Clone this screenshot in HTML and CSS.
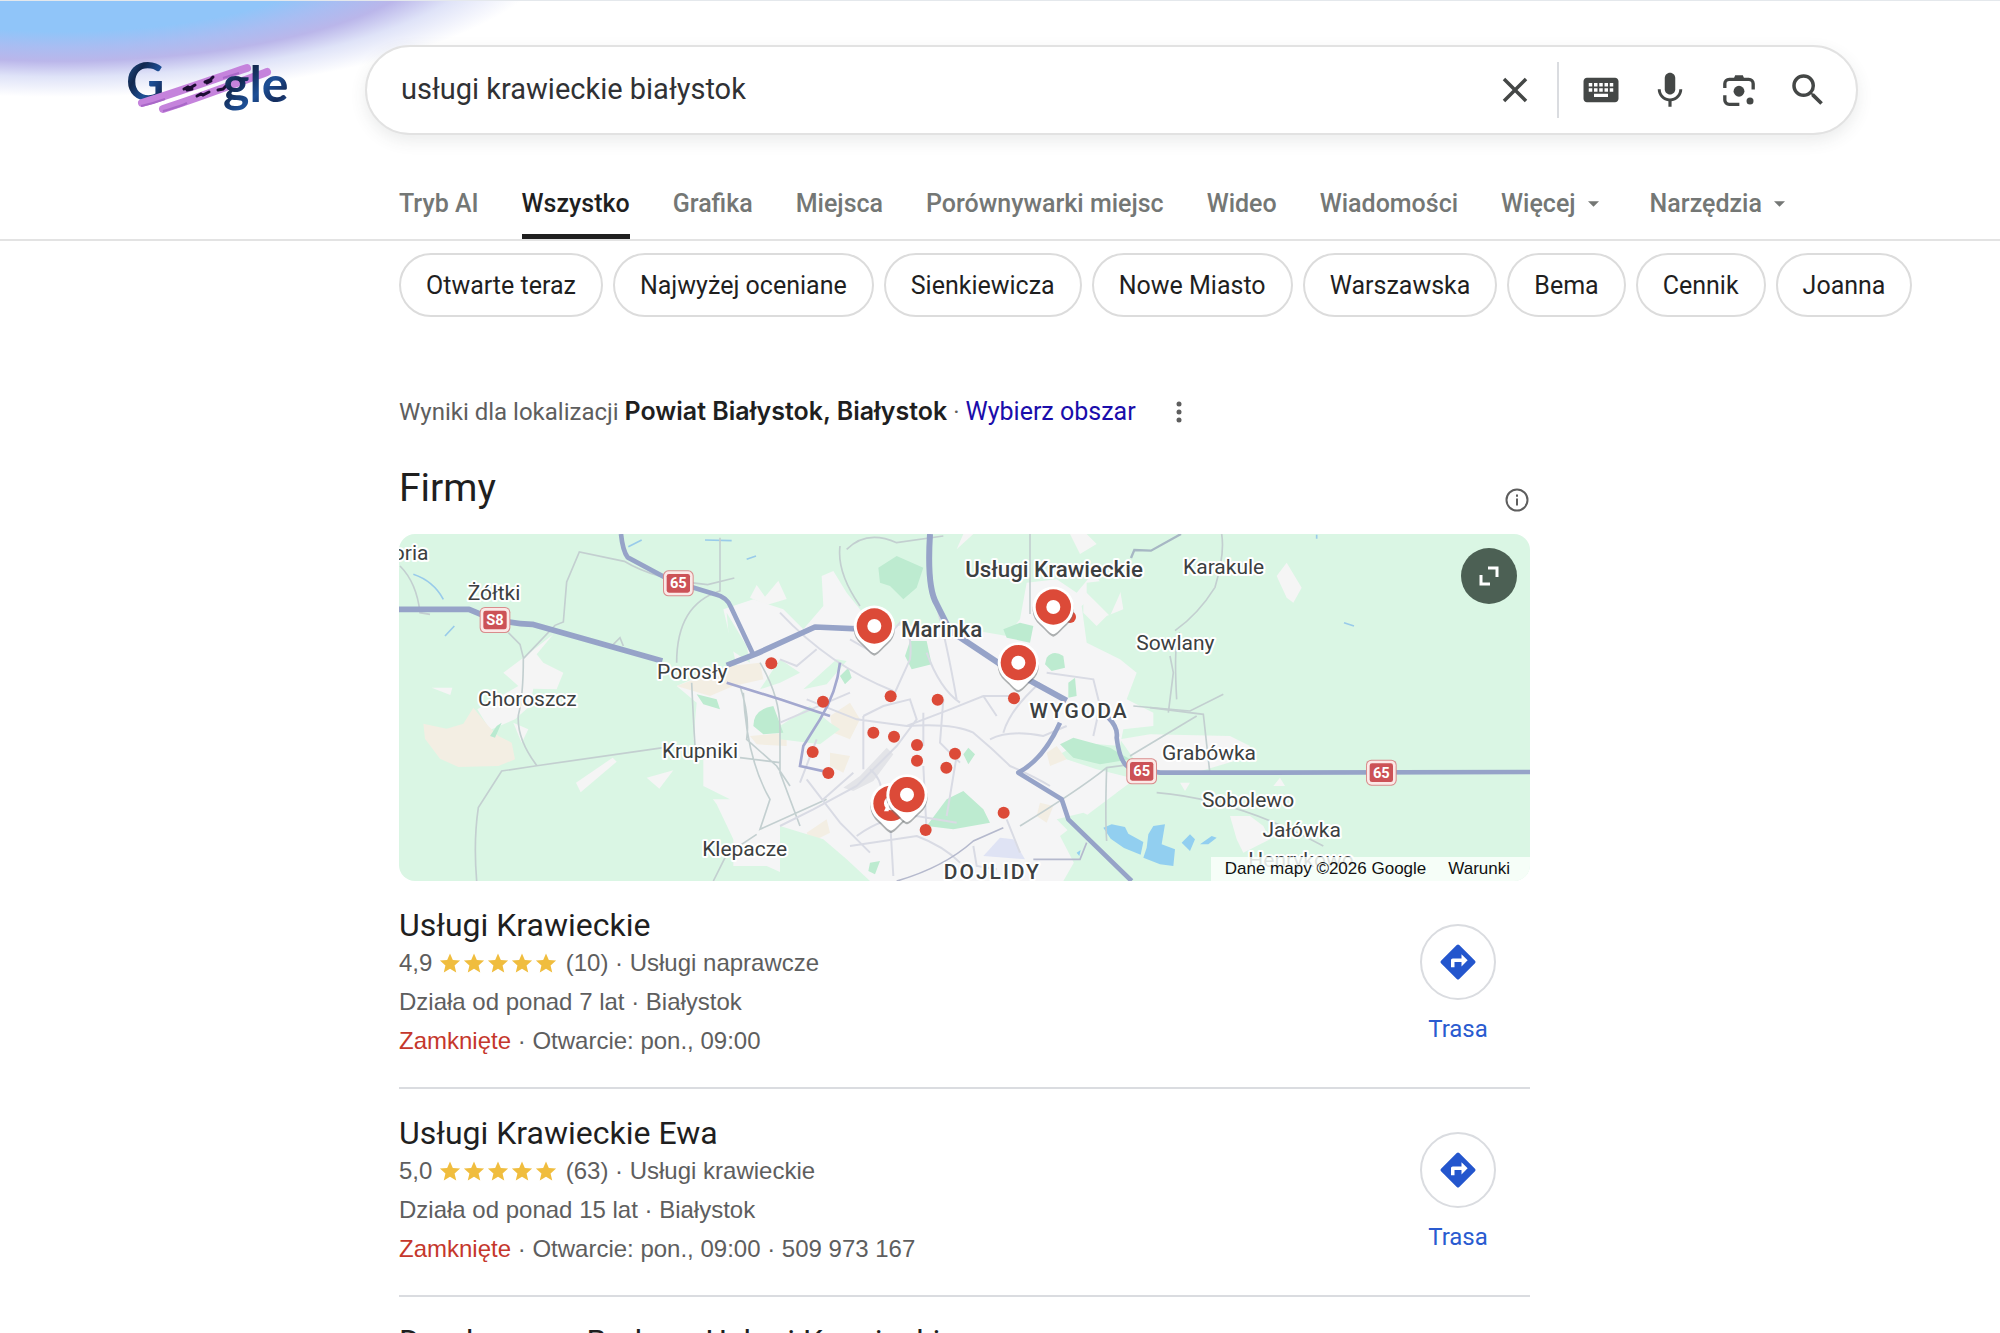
FILE: index.html
```html
<!DOCTYPE html>
<html lang="pl">
<head>
<meta charset="utf-8">
<meta name="viewport" content="width=device-width, initial-scale=1">
<title>usługi krawieckie białystok - Szukaj w Google</title>
<link rel="stylesheet" href="styles.css">
</head>
<body>
<svg class="defs" width="0" height="0" aria-hidden="true">
  <symbol id="star" viewBox="0 0 24 24"><path d="M12 1.500l3.100 7.200 7.900.7-6 5.200 1.800 7.800L12 18.300l-6.800 4.100L7 14.600 1 9.400l7.900-.7z"/></symbol>
  <symbol id="route" viewBox="0 0 24 24"><path d="M21.710 11.290l-9-9a1 1 0 0 0-1.410 0l-9 9a1 1 0 0 0 0 1.410l9 9c.39.39 1.020.39 1.410 0l9-9a1 1 0 0 0 0-1.410zM14 14.500V12h-4v3H8v-4c0-.55.45-1 1-1h5V7.500l3.500 3.500-3.500 3.500z"/></symbol>
  <symbol id="caret" viewBox="0 0 12 6"><path d="M0 0h12L6 6z"/></symbol>
</svg>

<header class="header">
  <div class="top">
    <a class="logo" href="#" aria-label="Google">
      <svg viewBox="0 0 170 64" width="170" height="64">
        <defs>
          <linearGradient id="ink" x1="0" y1="0" x2="1" y2="1">
            <stop offset="0" stop-color="#2a66a8"/><stop offset=".35" stop-color="#12284f"/><stop offset=".6" stop-color="#1d4f96"/><stop offset=".8" stop-color="#142c5c"/><stop offset="1" stop-color="#2b6cc4"/>
          </linearGradient>
        </defs>
        <text class="logo-text logo-cap" x="-1" y="45" fill="url(#ink)">G</text>
        <g fill="none" stroke="#c583dc" stroke-width="8" stroke-linecap="round">
          <path d="M15 47C45 38 90 22 120 12"/><path d="M36 53C65 44 105 29 140 16"/>
        </g>
        <g fill="none" stroke="#a968c8" stroke-width="2"><path d="M14 50c10-2 16-4 24-7M36 55c10-3 16-4 24-8M96 22l16-5"/></g>
        <g fill="none" stroke="#1c0d33" stroke-width="3" stroke-linecap="round">
          <path d="M57 33l4-2 2 1 5-3M78 26l5-2 3-3M70 40l4-2 2 1 6-3M91 34l5-1 3-3M60 34l5-1M80 27l4-2"/>
        </g>
        <text class="logo-text" x="96" y="46" fill="url(#ink)">gle</text>
      </svg>
    </a>
    <form class="search" role="search">
      <input class="search-input" type="text" aria-label="Szukaj" value="usługi krawieckie białystok">
      <button class="icon-btn" type="button" aria-label="Wyczyść"><svg viewBox="0 0 24 24"><path d="M19 6.410 17.590 5 12 10.590 6.410 5 5 6.410 10.590 12 5 17.590 6.410 19 12 13.410 17.590 19 19 17.590 13.410 12z"/></svg></button>
      <span class="divider"></span>
      <button class="icon-btn" type="button" aria-label="Klawiatura"><svg viewBox="0 0 24 24"><path d="M20 5H4c-1.100 0-1.990.9-1.990 2L2 17c0 1.100.9 2 2 2h16c1.100 0 2-.9 2-2V7c0-1.100-.9-2-2-2zm-9 3h2v2h-2V8zm0 3h2v2h-2v-2zM8 8h2v2H8V8zm0 3h2v2H8v-2zm-1 2H5v-2h2v2zm0-3H5V8h2v2zm9 6H8v-1.800h8V16zm0-3h-2v-2h2v2zm0-3h-2V8h2v2zm3 3h-2v-2h2v2zm0-3h-2V8h2v2z"/></svg></button>
      <button class="icon-btn" type="button" aria-label="Szukaj głosem"><svg viewBox="0 0 24 24"><path d="M12 14.500c1.660 0 3-1.340 3-3V5.200c0-1.660-1.340-3-3-3s-3 1.340-3 3v6.300c0 1.660 1.340 3 3 3z"/><path d="M17.300 11.500c0 3-2.400 5.300-5.300 5.300s-5.300-2.300-5.300-5.300H5c0 3.500 2.700 6.400 6.100 6.900v3.100h1.800v-3.100c3.400-.5 6.100-3.400 6.100-6.900z"/></svg></button>
      <button class="icon-btn" type="button" aria-label="Szukaj obrazem"><svg viewBox="0 0 24 24"><g fill="none" stroke="currentColor" stroke-width="1.900"><path d="M3.900 10.800V8.400a2.500 2.500 0 0 1 2.500-2.500h11.200a2.500 2.500 0 0 1 2.500 2.500v3.300M3.900 15v2.700a2.500 2.500 0 0 0 2.500 2.500h5.800"/></g><path d="M9 5.500l.8-1.900h4.400l.8 1.900z"/><circle cx="12" cy="12.700" r="3.100"/><circle cx="18.300" cy="18.300" r="2"/></svg></button>
      <button class="icon-btn" type="submit" aria-label="Szukaj"><svg viewBox="0 0 24 24"><path d="M15.500 14h-.790l-.280-.270A6.471 6.471 0 0 0 16 9.500 6.500 6.500 0 1 0 9.500 16c1.610 0 3.090-.590 4.230-1.570l.270.280v.790l5 4.990L20.490 19l-4.990-5zm-6 0C7.010 14 5 11.990 5 9.500S7.010 5 9.500 5 14 7.010 14 9.500 11.990 14 9.500 14z"/></svg></button>
    </form>
  </div>
  <nav class="tabs" aria-label="Rodzaje wyników">
    <a href="#">Tryb AI</a>
    <a href="#" class="active" aria-current="page">Wszystko</a>
    <a href="#">Grafika</a>
    <a href="#">Miejsca</a>
    <a href="#">Porównywarki miejsc</a>
    <a href="#">Wideo</a>
    <a href="#">Wiadomości</a>
    <button type="button">Więcej<svg class="caret"><use href="#caret"/></svg></button>
    <button type="button" class="tools">Narzędzia<svg class="caret"><use href="#caret"/></svg></button>
  </nav>
</header>

<main class="main">
  <div class="chips">
    <a href="#">Otwarte teraz</a>
    <a href="#">Najwyżej oceniane</a>
    <a href="#">Sienkiewicza</a>
    <a href="#">Nowe Miasto</a>
    <a href="#">Warszawska</a>
    <a href="#">Bema</a>
    <a href="#">Cennik</a>
    <a href="#">Joanna</a>
  </div>

  <div class="column">
    <div class="location">
      <p>Wyniki dla lokalizacji <strong>Powiat Białystok, Białystok</strong> · <a href="#">Wybierz obszar</a></p>
      <button type="button" class="more" aria-label="Więcej opcji"><svg viewBox="0 0 6 22" width="6" height="22"><circle cx="3" cy="3" r="2.500"/><circle cx="3" cy="11" r="2.500"/><circle cx="3" cy="19" r="2.500"/></svg></button>
    </div>

    <div class="heading">
      <h1>Firmy</h1>
      <button type="button" class="info" aria-label="Informacje o wynikach"><svg viewBox="0 0 24 24" width="24" height="24"><circle cx="12" cy="12" r="10.500" fill="none" stroke="currentColor" stroke-width="2"/><path d="M11 6.500h2v2.200h-2zM11 10.500h2v7h-2z"/></svg></button>
    </div>

    <section class="map" aria-label="Mapa">
      <svg class="map-canvas" viewBox="27 24 3393 1041" preserveAspectRatio="xMidYMid slice">
        <defs>
          <g id="pin">
            <path d="M0 84C-8 84-22 66-40 50a62 62 0 1 1 80 0C22 66 8 84 0 84z" fill="#6f7576" opacity=".55" transform="translate(0 5)"/>
            <path d="M0 82C-8 82-22 64-40 48a62 62 0 1 1 80 0C22 64 8 82 0 82z" fill="#fff"/>
            <circle r="53" fill="#dc4a38"/><circle r="21" fill="#fff"/>
          </g>
          <g id="shield">
            <rect x="-46" y="-39" width="92" height="78" rx="16" fill="#d98c8c"/><rect x="-43" y="-36" width="86" height="72" rx="14" fill="#fbe9e7"/><rect x="-35" y="-28" width="70" height="56" rx="7" fill="#cc5257"/>
          </g>
        </defs>
        <rect x="27" y="24" width="3393" height="1041" fill="#daf6e4"/>

        <!-- western villages and fields -->
        <g fill="#f5f5f5">
          <path d="M490 325L440 385 460 410 520 440 500 490 430 488 420 540 375 580 300 612 262 550 385 480 340 440 400 395z"/>
          <path d="M125 485h62l-6 22zM558 770l110-75 12 12-108 92zM770 755l80-22-42 55zM370 590l45 20-20 40zM1080 215l20-38 25 35 40-48 25 55-60 18z"/>
          <path d="M2660 150l30-40 45 75-25 45-20-15zM2650 780l20-25 15 25zM2370 770h30l-15 25zM2520 870h60l40 30 20 40-80 40-20-40z"/>
        </g>
        <path d="M250 545l45 55 30 30 40 20 10 50-50 20-120 3-55-25-45-60-5-45 70 15 50-15z" fill="#f3eee3"/>
        <path d="M320 600l15-10-20 45-15-5z" fill="#b9ead0"/>
        <g fill="none" stroke="#99cbea" stroke-width="5"><path d="M70 145q60 20 90 75M165 330l28-30M715 62l40-20M945 42l80 2M1070 100l28-10M2862 290l30 10M2780 26v12"/></g>

        <!-- built-up area -->
        <path d="M1000 250L1090 220 1180 250 1240 310 1300 240 1295 150 1330 135 1370 200 1450 300 1560 300 1680 300 1850 330 1890 280 1910 170 2000 160 2060 200 2110 140 2140 180 2075 240 2090 350 2190 400 2240 440 2210 520 2290 560 2290 600 2200 610 2190 660 2070 650 2000 690 2120 730 2240 760 2180 800 2160 900 2080 860 2000 880 2080 960 2020 1065 1230 1065 1130 1020 1030 1020 1030 940 980 835 940 780 940 700 910 640 920 530 860 480 930 450 1040 420z" fill="#f5f5f6"/>
        <path d="M2080 200l60 20 50-30 10 60-50 20-30 30-40-40zM2190 640l90-15 240 5 60 30-30 40-150 45-150-20zM2040 24h50l30 30-50 30zM1700 70l50-46h-30z" fill="#f5f5f5"/>
        <g fill="#f3eee3">
          <path d="M860 480l160-60 90-10 10 50-90 20-70 30zM1080 630l110-10v40l-90-5zM1320 570l60-40 30 50-30 60-50-20zM1320 680l60 10-20 50-40-20zM1250 920l60-40 10 40-60 30z"/>
          <path d="M1970 680l30-20 30 40-50 20zM1950 830l40 10-20 50-30-20z"/>
        </g>
        <g fill="#daf6e4">
          <path d="M1170 600l90-60 60 50 30 20-60 45-120-15zM1170 470l-60 20 60-90 60 40zM2090 200l70 70 40-90-20-20-90 10zM1240 490l100-90 30 5-60 70z"/>
          <path d="M2010 930l90-70 120-90 120-10v305h-260zM1170 900l130 40 70 60 70 65h-270z"/>
          <path d="M1010 260l60 100 10 50-60-40zM940 780l80 40-60 0z"/>
        </g>
        <g fill="#bdebd0">
          <path d="M1465 125l55-35 80 35-20 60-40 35-40-40-30-10zM1560 345l50 0 15 70-60 15-20-40zM1350 450l25-25 10 30-20 20zM2010 655l40-20 110 30 60 35-90 15-80-20zM1610 900l60-80 50-25 60 55 20 40-110 20zM1090 600q0-50 60-60l30 80-60 5zM920 505l60 15 10 30-50-15zM1970 395q20-25 50-5l5 35-40 10-20-20zM1840 310l50-20 40 10-10 50-70-15zM2035 470l20-15 5 55-25 5zM1735 665l20 20-20 30-15-30zM1440 1010l30-5-15 40-20-10z"/>
        </g>
        <path d="M1780 990l50-55 40 5 35 60z" fill="#dfe3f4"/>
        <path d="M1410 750l80-85 20 20-60 80-60 30-30-10z" fill="#e3e4e8"/>
        <g fill="#92cff0"><path d="M2140 905l25-10 40 8 10 20 45 25-8 38-50-20-40-28zM2275 925l15-25 35-5-10 60 40 15-5 50-40-5-50-20 10-30zM2375 950l25-25 15 15-15 35zM2430 955l35-25 15 5-25 20zM2060 980l12-8-4 18z"/></g>

        <!-- minor roads -->
        <g fill="none" stroke="#c3cfd0" stroke-width="5">
          <path d="M30 120q50 50 60 140l30 5M260 1065q-10-120 5-220l70-110 100-15 385-55M440 718q-60-80-55-150 15-60 15-170l95-100 25-10 10-120 38-90 135 28q90 55 250 70l80-20M400 395l-10-40-35-35M990 35v160q-130 40-130 215M915 660q-5-80-10-190M670 355l20-20 10 25M970 1065l40-80 90-60M1350 60q-10 80 60 180M1370 70q60-60 150-20l140-20"/>
          <path d="M1050 480q30 90 20 160l90 80 40 60M1060 500q10 200 80 320l-30 90 200-90M1110 410q60 100 60 200v130l60 160M1050 695l120 15M1920 24v240"/>
          <path d="M2360 520q-10-180 10-200M2230 540l170 15 100-50M2150 725q-5 150 0 220M1890 900q180-110 260-175l150-20M2340 390l10 50-15 120"/>
          <path d="M2495 24q10 60-20 160-50 80-120 130M2280 545l160 20 20 180M2220 690l200-120M2300 800q240 20 500 160"/>
        </g>
        <g fill="none" stroke="#d9dbe4" stroke-width="6">
          <path d="M1170 260q150 160 340 235M1170 400l50 20 60-50M1380 340l70 40 80-90q40 30 30 110l-50 110M1170 590l210-90M1610 380q40 110 100 150M1640 240q30 110 60 280M1420 570l60-30 80-20 20 60-60 80-120 120-130 70-100 50M1420 570v160M1250 520l150 60 150 20 130-50 100-40 100 0M1780 510l40 60M1550 600q140-10 200 20 60 50 110 100 70 30 120 60"/>
          <path d="M1600 560v100M1660 520l-10 130 60 60M1800 640q60-30 160-10l70-30M1970 440q70 10 140 20l20 80-20 90M1840 620q20-70 110-150M1400 930q80-60 180-60l120 20M1380 960l200-30q80 30 130 80M1500 880l10 170M1440 730q50 40 30 120M1600 720l10 200M1700 690l-30 180M1850 880l40 100M1750 960l10 60 60 10M1250 760l100 130 90 90M1300 820l90-80M1280 640l-50 130"/>
        </g>
        <g fill="none" stroke="#b5b9cd" stroke-width="5"><path d="M1520 1065q140-40 230-120l90-40M1930 1000l140 0 20-50"/></g>

        <!-- national roads -->
        <g fill="none" stroke="#96a3c8" stroke-width="17" stroke-linejoin="round">
          <path d="M27 250h210q100 45 190 45l390 110M1010 418l90-35 175-80 180 8"/>
          <path d="M1620 24q-10 160 20 210l40 80 150 100 200 110" stroke-width="18"/>
          <path d="M693 24q5 50 20 70l130 70 130 40q40 10 50 40l65 138M2010 590q-50 110-125 150l130 80 20 60 190 185M2155 575q30 30 25 60 10 80 40 90l90 15h160l950-2" stroke-width="14"/>
        </g>
        <g fill="none" stroke="#a3a8cf" stroke-width="8"><path d="M1010 470l160 50 150 50M1350 410q-10 90-60 170l-50 80-10 60 90 20"/></g>
        <path d="M2223 96l10-24 50 2 90-50" fill="none" stroke="#a7b7c4" stroke-width="7"/>

        <g fill="#dc4a38">
          <circle cx="1144" cy="412" r="18"/><circle cx="1299" cy="527" r="18"/><circle cx="1502" cy="511" r="18"/><circle cx="1643" cy="521" r="18"/><circle cx="1872" cy="517" r="18"/><circle cx="1450" cy="620" r="18"/><circle cx="1512" cy="632" r="18"/><circle cx="1581" cy="657" r="18"/><circle cx="1581" cy="704" r="18"/><circle cx="1695" cy="683" r="18"/><circle cx="1669" cy="725" r="18"/><circle cx="1268" cy="678" r="18"/><circle cx="1315" cy="741" r="18"/><circle cx="1841" cy="860" r="18"/><circle cx="1607" cy="912" r="18"/><circle cx="2040" cy="273" r="18"/>
        </g>
        <use href="#pin" x="1453" y="300"/><use href="#pin" x="1990" y="243"/><use href="#pin" x="1885" y="410"/><use href="#pin" x="1503" y="832"/><use href="#pin" x="1551" y="806"/>
        <path d="M1482 856l14-30v30z" fill="#fff"/>

        <use href="#shield" x="865" y="172"/><use href="#shield" x="315" y="282"/><use href="#shield" x="2255" y="736"/><use href="#shield" x="2974" y="740"/>
        <g class="road-no"><text x="865" y="186">65</text><text x="315" y="296">S8</text><text x="2255" y="751">65</text><text x="2974" y="755">65</text></g>

        <g class="place">
          <text x="62" y="102">oria</text><text x="312" y="223">Żółtki</text><text x="412" y="541">Choroszcz</text><text x="907" y="458">Porosły</text><text x="930" y="697">Krupniki</text><text x="1064" y="989">Klepacze</text>
          <text x="2501" y="144">Karakule</text><text x="2356" y="373">Sowlany</text><text x="2457" y="703">Grabówka</text><text x="2574" y="843">Sobolewo</text><text x="2735" y="932">Jałówka</text><text x="2733" y="1022">Henrykowo</text>
        </g>
        <g class="place business"><text x="1992" y="153">Usługi Krawieckie</text><text x="1655" y="333">Marinka</text></g>
        <g class="place district"><text x="2067" y="575">WYGODA</text><text x="1807" y="1060">DOJLIDY</text></g>
      </svg>
      <button type="button" class="expand" aria-label="Powiększ mapę"><svg viewBox="0 0 20 20" width="20" height="20"><path d="M9 2h9v9M2 9v9h9" fill="none" stroke="currentColor" stroke-width="3"/></svg></button>
      <div class="attribution"><span>Dane mapy ©2026 Google</span><a href="#">Warunki</a></div>
    </section>

    <article class="result">
      <div class="details">
        <h2>Usługi Krawieckie</h2>
        <p class="rating">4,9 <span class="stars" role="img" aria-label="Ocena 4,9 na 5"><svg><use href="#star"/></svg><svg><use href="#star"/></svg><svg><use href="#star"/></svg><svg><use href="#star"/></svg><svg><use href="#star"/></svg></span> (10) · Usługi naprawcze</p>
        <p>Działa od ponad 7 lat · Białystok</p>
        <p><span class="closed">Zamknięte</span> · Otwarcie: pon., 09:00</p>
      </div>
      <a class="route" href="#"><span class="route-icon"><svg><use href="#route"/></svg></span>Trasa</a>
    </article>
    <article class="result">
      <div class="details">
        <h2>Usługi Krawieckie Ewa</h2>
        <p class="rating">5,0 <span class="stars" role="img" aria-label="Ocena 5,0 na 5"><svg><use href="#star"/></svg><svg><use href="#star"/></svg><svg><use href="#star"/></svg><svg><use href="#star"/></svg><svg><use href="#star"/></svg></span> (63) · Usługi krawieckie</p>
        <p>Działa od ponad 15 lat · Białystok</p>
        <p><span class="closed">Zamknięte</span> · Otwarcie: pon., 09:00 · 509 973 167</p>
      </div>
      <a class="route" href="#"><span class="route-icon"><svg><use href="#route"/></svg></span>Trasa</a>
    </article>
    <article class="result">
      <div class="details">
        <h2>Dorabanowa Barbara Usługi Krawieckie</h2>
      </div>
    </article>
  </div>
</main>
</body>
</html>
```
FILE: styles.css
```css
* { box-sizing: border-box; }

html, body { height: 100%; }

body {
  margin: 0;
  overflow: hidden;
  background: #fff;
  color: #1f1f1f;
  font-family: Roboto, "Liberation Sans", sans-serif;
  font-size: 25px;
}

a { color: inherit; text-decoration: none; }

button {
  padding: 0;
  border: 0;
  background: none;
  color: inherit;
  font: inherit;
  cursor: pointer;
}

svg { display: block; fill: currentColor; }

h1, h2, p { margin: 0; font-weight: 400; }

.defs { position: absolute; }

.header {
  border-top: 1px solid #e4e8ec;
  border-bottom: 2px solid #e3e3e3;
  background: radial-gradient(ellipse 500px 156px at 60px -60px, #90c5f9 58%, #a9bdf2 68%, #bab6ea 77%, #dfe3f8 87%, #fff 100%) no-repeat;
}

.top {
  display: flex;
  align-items: flex-start;
  padding: 44px 142px 0 127px;
}

.logo { width: 238px; padding-top: 11px; }

.logo svg { overflow: visible; }

.logo-text { font: 700 50px Lato, sans-serif; }

.logo-cap { font-size: 53px; }

.search {
  display: flex;
  flex: 1;
  align-items: center;
  height: 90px;
  padding: 0 27px 0 34px;
  border: 2px solid #e2e2e2;
  border-radius: 45px;
  background: #fff;
  box-shadow: 0 6px 16px rgba(60, 64, 67, .1);
  color: #444746;
}

.search-input {
  flex: 1;
  min-width: 0;
  padding: 0 0 2px;
  border: 0;
  outline: 0;
  background: none;
  color: #303134;
  font: 29px Roboto, sans-serif;
}

.icon-btn { width: 42px; height: 42px; margin-left: 27px; }

.icon-btn svg { width: 42px; height: 42px; }

.divider {
  width: 2px;
  height: 56px;
  margin-left: 21px;
  margin-right: -6px;
  background: #dadce0;
}

.tabs {
  display: flex;
  gap: 43px;
  height: 104px;
  padding-left: 399px;
  color: #747775;
  font-weight: 500;
  white-space: nowrap;
}

.tabs a, .tabs button {
  display: flex;
  align-items: center;
  height: 104px;
  padding-top: 38px;
  border-bottom: 5px solid transparent;
}

.tabs .active { border-color: #1f1f1f; color: #1f1f1f; }

.tabs .tools { margin-left: 8px; }

.caret { width: 11px; height: 6px; margin-left: 12px; }

.main { padding: 12px 80px 0 399px; }

.chips { display: flex; gap: 10px; white-space: nowrap; }

.chips a {
  display: flex;
  align-items: center;
  height: 64px;
  padding: 0 25px;
  border: 2px solid #dcdcdc;
  border-radius: 32px;
}

.column { max-width: 1131px; }

.location {
  display: flex;
  align-items: center;
  gap: 40px;
  margin-top: 77px;
  color: #5e5e5e;
  font-size: 24px;
  line-height: 34px;
}

.location strong {
  color: #1f1f1f;
  font-family: Inter, sans-serif;
  font-size: 25px;
  font-weight: 600;
}

.location a { color: #1a0dab; font-size: 25px; }

.heading {
  display: flex;
  align-items: flex-end;
  justify-content: space-between;
  margin: 35px 1px 22px 0;
}

h1 { font-size: 39px; line-height: 48px; }

.info { color: #5e5e5e; }

.map {
  position: relative;
  height: 347px;
  overflow: hidden;
  border-radius: 16px;
}

.map-canvas { width: 100%; height: 100%; }

.place {
  fill: #3c3f41;
  stroke: #fff;
  stroke-width: 12px;
  stroke-linejoin: round;
  paint-order: stroke;
  font-size: 63px;
  text-anchor: middle;
}

.business { font-weight: 500; font-size: 67px; }

.district { font-weight: 500; letter-spacing: 6px; }

.road-no {
  fill: #fff;
  font-weight: 700;
  font-size: 44px;
  text-anchor: middle;
}

.expand {
  position: absolute;
  top: 14px;
  right: 13px;
  display: flex;
  align-items: center;
  justify-content: center;
  width: 56px;
  height: 56px;
  border-radius: 50%;
  background: #4c6054;
  color: #fff;
}

.attribution {
  position: absolute;
  right: 0;
  bottom: 0;
  display: flex;
  gap: 22px;
  padding: 0 20px 0 14px;
  background: rgba(250, 255, 252, .85);
  color: #111;
  font: 17px/24px "Liberation Sans", sans-serif;
}

.result {
  display: flex;
  justify-content: space-between;
  height: 208px;
  padding: 26px 34px 0 0;
  border-bottom: 2px solid #dadce0;
}

.details {
  color: #5e5e5e;
  font: 24px/39px "Liberation Sans", sans-serif;
}

h2 {
  color: #1f1f1f;
  font: 32px/36px Roboto, sans-serif;
}

.stars {
  display: inline-flex;
  gap: 2px;
  margin-right: 2px;
  color: #f0bd3e;
  vertical-align: -3px;
}

.stars svg { width: 22px; height: 22px; }

.rating { height: 39px; }

.closed { color: #c5372c; }

.route {
  display: flex;
  flex-direction: column;
  align-items: center;
  gap: 13px;
  padding-top: 17px;
  color: #2a5bd0;
  font-size: 24px;
  line-height: 32px;
}

.route-icon {
  display: flex;
  align-items: center;
  justify-content: center;
  width: 76px;
  height: 76px;
  border: 2px solid #dadce0;
  border-radius: 50%;
  color: #2456cd;
}

.route-icon svg { width: 42px; height: 42px; }
```
